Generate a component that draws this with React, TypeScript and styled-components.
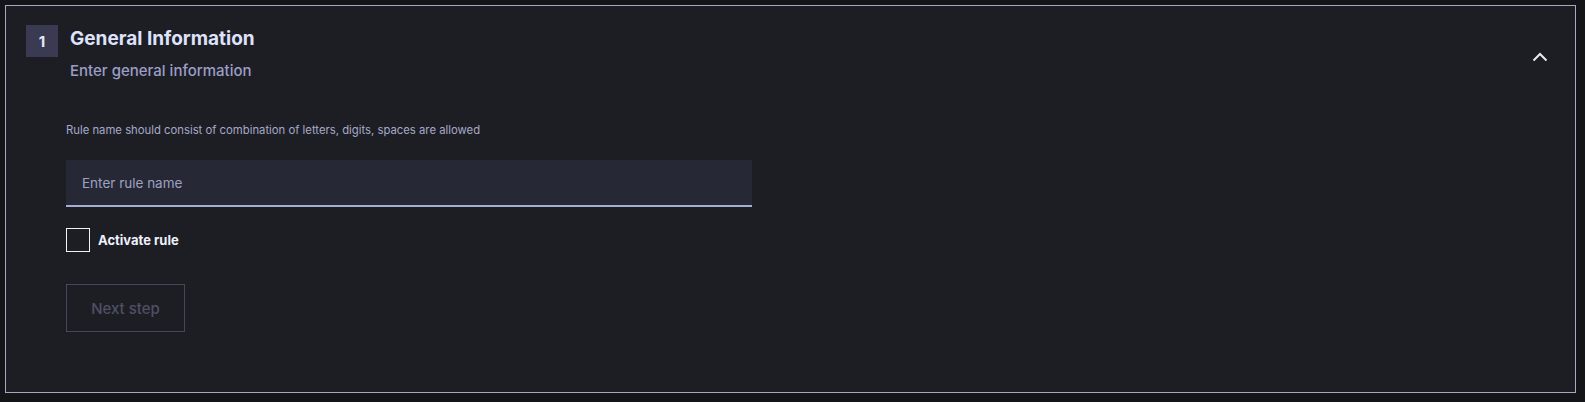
import React from "react";
import styled, { createGlobalStyle } from "styled-components";

const Global = createGlobalStyle`
  html, body { margin: 0; padding: 0; background: #141519; }
  body { font-family: Inter, "Liberation Sans", Arial, sans-serif; }
  * { box-sizing: border-box; }
`;

const Page = styled.div`
  padding: 5px 9px 10px 5px;
  width: 1585px;
  height: 402px;
`;

const Panel = styled.section`
  border: 1px solid #a7a8c4;
  background: #1d1e24;
  height: 388px;
  display: flex;
  flex-direction: column;
`;

const Header = styled.div`
  display: flex;
  align-items: flex-start;
  padding: 21px 0 0 20px;
`;

const Badge = styled.div`
  width: 32px;
  height: 32px;
  margin-top: -2px;
  background: #3a3b52;
  color: #e6e8f8;
  font-weight: 700;
  font-size: 15px;
  display: flex;
  align-items: center;
  justify-content: center;
  flex-shrink: 0;
`;

const Titles = styled.div`
  margin-left: 12px;
  flex: 1;
  display: flex;
  flex-direction: column;
`;

const Title = styled.h2`
  margin: 0;
  font-size: 19px;
  line-height: 24px;
  font-weight: 700;
  color: #dfe2fb;
`;

const Subtitle = styled.div`
  font-size: 15px;
  line-height: 20px;
  font-weight: 500;
  color: #9b9ec6;
  margin-top: 10px;
`;

const Toggle = styled.button`
  background: transparent;
  border: none;
  padding: 0;
  margin-top: 14px;
  margin-right: 19px;
  color: #e9eaf5;
  width: 32px;
  height: 32px;
  display: flex;
  align-items: center;
  justify-content: center;
  cursor: pointer;
`;

const Body = styled.div`
  padding: 42px 0 0 60px;
  display: flex;
  flex-direction: column;
  align-items: flex-start;
`;

const Hint = styled.div`
  font-size: 11.3px;
  line-height: 14px;
  color: #a6a9c8;
`;

const Input = styled.input`
  margin-top: 23px;
  width: 686px;
  height: 47px;
  background: #272836;
  border: none;
  border-bottom: 2px solid #a4aed2;
  padding: 0 16px;
  font-family: inherit;
  font-size: 13.5px;
  color: #e0e2f5;
  outline: none;
  &::placeholder { color: #9ea1c2; }
`;

const CheckRow = styled.label`
  margin-top: 21px;
  display: flex;
  align-items: center;
  gap: 8px;
  cursor: pointer;
`;

const Box = styled.span`
  width: 24px;
  height: 24px;
  border: 1px solid #f1f2f8;
  display: inline-block;
`;

const CheckLabel = styled.span`
  font-size: 13px;
  font-weight: 700;
  color: #eef0fc;
`;

const NextButton = styled.button`
  margin-top: 32px;
  width: 119px;
  height: 48px;
  background: transparent;
  border: 1px solid #45475b;
  color: #4e5067;
  font-family: inherit;
  font-size: 15px;
  font-weight: 500;
`;

export default function App() {
  return (
    <Page>
      <Global />
      <Panel>
        <Header>
          <Badge>1</Badge>
          <Titles>
            <Title>General Information</Title>
            <Subtitle>Enter general information</Subtitle>
          </Titles>
          <Toggle aria-label="collapse">
            <svg width="16" height="10" viewBox="0 0 16 10" fill="none">
              <path d="M1.5 8.5 L8 2 L14.5 8.5" stroke="currentColor" strokeWidth="2" />
            </svg>
          </Toggle>
        </Header>
        <Body>
          <Hint>Rule name should consist of combination of letters, digits, spaces are allowed</Hint>
          <Input placeholder="Enter rule name" />
          <CheckRow>
            <Box />
            <CheckLabel>Activate rule</CheckLabel>
          </CheckRow>
          <NextButton disabled>Next step</NextButton>
        </Body>
      </Panel>
    </Page>
  );
}
